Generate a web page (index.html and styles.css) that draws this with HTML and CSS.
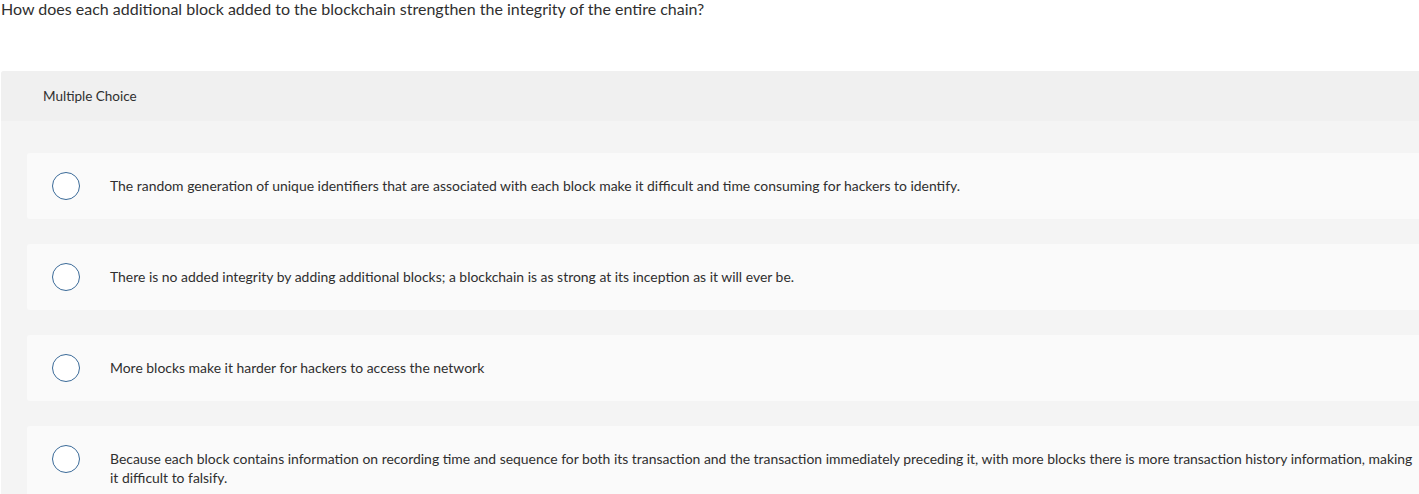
FILE: index.html
```html
<!DOCTYPE html>
<html>
<head>
<meta charset="utf-8">
<link rel="stylesheet" href="styles.css">
</head>
<body>
<div class="question">How does each additional block added to the blockchain strengthen the integrity of the entire chain?</div>
<div class="panel">
  <div class="panel-head">Multiple Choice</div>
  <div class="choices">
    <div class="choice"><span class="radio"></span><span class="label">The random generation of unique identifiers that are associated with each block make it difficult and time consuming for hackers to identify.</span></div>
    <div class="choice"><span class="radio"></span><span class="label">There is no added integrity by adding additional blocks; a blockchain is as strong at its inception as it will ever be.</span></div>
    <div class="choice"><span class="radio"></span><span class="label">More blocks make it harder for hackers to access the network</span></div>
    <div class="choice"><span class="radio"></span><span class="label">Because each block contains information on recording time and sequence for both its transaction and the transaction immediately preceding it, with more blocks there is more transaction history information, making it difficult to falsify.</span></div>
  </div>
</div>
</body>
</html>
```
FILE: styles.css
```css
html, body {
  margin: 0;
  padding: 0;
  background: #ffffff;
  overflow: hidden;
}
body {
  font-family: "Lato", "Open Sans", sans-serif;
  color: #2f2f2f;
  width: 1419px;
}
.question {
  font-size: 16px;
  line-height: 18px;
  padding-left: 1px;
  height: 71px;
}
.panel {
  margin-left: 1px;
  width: 1460px;
  background: #f4f4f4;
  border-radius: 3px 3px 0 0;
}
.panel-head {
  background: #f0f0f0;
  height: 50px;
  display: flex;
  align-items: center;
  padding-left: 42px;
  font-size: 13.5px;
  border-radius: 3px 3px 0 0;
}
.choices {
  padding: 32px 0 40px 26px;
  display: flex;
  flex-direction: column;
  gap: 25px;
}
.choice {
  background: #fafafa;
  border-radius: 3px;
  display: flex;
  align-items: flex-start;
  padding: 23px 0 24px 25px;
}
.radio {
  flex: none;
  width: 28px;
  height: 28px;
  box-sizing: border-box;
  border: 1.5px solid #3a6a98;
  border-radius: 50%;
  background: #ffffff;
  margin: -4.5px 30px -4.5px 0;
}
.label {
  font-size: 13.93px;
  line-height: 19px;
  width: 1312px;
}
```
